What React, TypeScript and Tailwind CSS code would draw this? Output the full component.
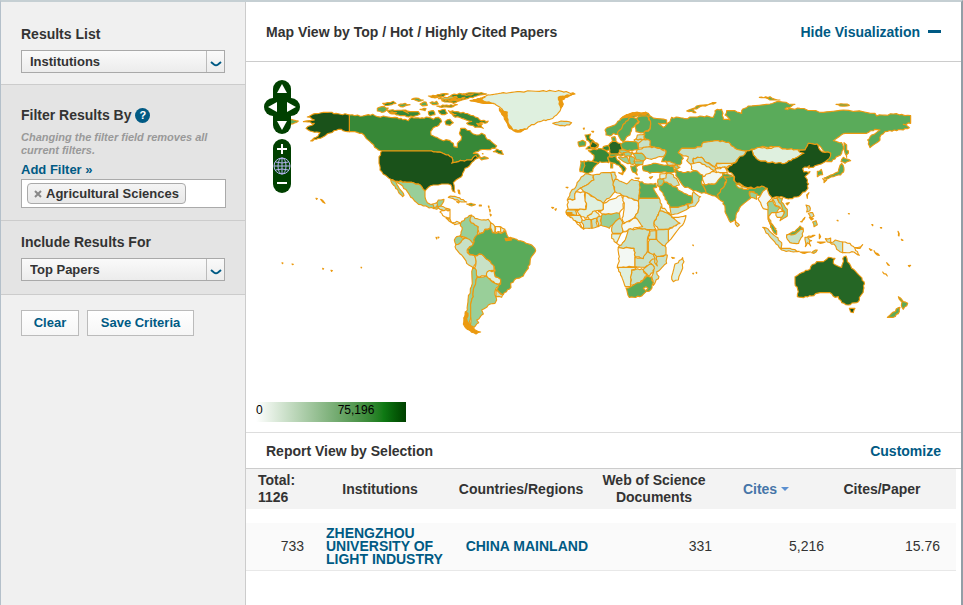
import React from "react";

type Shape = [fill: string, points: string];

const C = {
  deepest: "#1a521a",
  deep: "#256625",
  strong: "#378837",
  mid: "#5aab5a",
  light: "#99cf99",
  pale: "#c8e1c6",
  faint: "#dff0df",
  blank: "#f3f8f3",
  none: "#ffffff",
  line: "#eb9a10",
};

const northAmerica: Shape[] = [
  [C.strong, "-62,105 -45,107 -22,108 -5,104 8,103 23,110 40,108 75,112 105,118 115,122 125,112 150,115 175,112 190,118 205,112 215,125 207,135 190,143 182,155 183,165 200,172 215,180 240,182 250,190 252,200 262,202 262,190 273,180 275,170 268,160 272,145 285,145 300,152 310,162 320,165 335,160 345,165 352,178 370,190 380,198 375,205 330,210 310,220 325,222 330,230 318,235 310,232 305,240 290,240 265,245 245,250 248,238 235,225 215,218 185,213 35,213 25,210 5,190 -15,170 -25,160 -45,155 -62,155"],
  [C.deepest, "-62,105 -102,100 -140,97 -165,101 -188,111 -167,120 -200,125 -167,130 -192,145 -180,153 -160,156 -150,158 -162,172 -178,183 -155,175 -132,165 -108,152 -86,148 -62,155"],
  [C.deepest, "35,213 185,213 215,218 235,225 248,238 245,250 265,245 290,240 305,240 318,226 323,235 305,248 298,258 285,265 278,280 272,292 258,300 250,308 253,325 255,337 248,333 243,315 235,312 215,312 205,315 190,315 175,322 165,333 155,320 145,312 125,307 110,307 80,304 62,298 40,283 30,270 27,250 27,230"],
  [C.light, "80,304 110,307 125,307 145,312 155,320 165,333 165,350 172,368 188,373 200,370 205,360 222,358 218,370 212,378 200,388 190,385 160,378 140,368 128,355 112,335 98,318"],
  [C.light, "62,298 76,304 85,320 102,346 98,350 85,335 70,315"],
  [C.faint, "300,62 330,55 360,45 400,38 450,35 520,32 575,34 615,42 570,52 575,70 573,85 560,105 540,118 510,125 480,138 465,148 450,155 430,152 415,140 408,120 410,100 400,95 390,82 375,72 340,68"],
  [C.line, "388,85 402,94 412,96 410,105 414,118 418,135 428,148 416,140 408,124 402,110 396,104"],
  [C.line, "430,150 445,152 465,146 452,156 438,156"],
  [C.line, "302,62 325,57 345,52 330,62 350,66 372,70 340,70"],
  [C.line, "565,52 590,45 612,42 586,52 576,60 580,72 572,84"],
  [C.mid, "22,85 35,80 55,84 48,92 35,97 22,93"],
  [C.strong, "50,90 75,92 100,90 120,95 145,95 150,102 135,108 110,110 85,105 60,100"],
  [C.strong, "235,92 260,95 285,100 310,107 335,122 355,123 345,130 330,128 340,145 315,142 290,130 305,124 275,115 250,108"],
  [C.strong, "215,62 245,45 290,40 335,38 350,42 320,48 295,55 270,62 250,70 232,66"],
  [C.strong, "175,48 210,43 235,42 220,50 195,54"],
  [C.strong, "200,78 230,75 262,74 250,80 215,82"],
  [C.strong, "205,92 225,88 232,100 215,104"],
  [C.strong, "175,95 190,92 195,104 180,108"],
  [C.strong, "225,125 240,118 250,128 240,136 228,134"],
  [C.strong, "38,70 60,68 70,64 78,70 60,75 45,76"],
  [C.mid, "85,75 105,70 120,74 105,78 92,80"],
  [C.mid, "125,58 145,55 160,60 145,64"],
  [C.mid, "150,72 168,66 172,76 158,78"],
  [C.mid, "180,68 200,64 205,72 188,74"],
  [C.mid, "150,88 168,86 165,92"],
  [C.light, "205,56 225,52 260,50 230,60"],
  [C.line, "225,62 245,58 262,52 252,60 285,52 268,60"],
  [C.line, "180,50 200,48 215,48 198,52"],
  [C.line, "275,44 310,42 290,46"],
  [C.line, "60,96 80,98 70,100"],
  [C.line, "100,92 115,100 108,96"],
  [C.line, "240,98 258,104 250,104"],
  [C.line, "320,130 338,132 325,136"],
  [C.strong, "370,215 380,207 395,212 400,223 385,220"],
  [C.mid, "325,232 342,230 355,235 335,240"],
  [C.pale, "235,352 248,349 262,352 290,366 275,366 250,356"],
  [C.mid, "290,372 303,370 316,374 305,378"],
  [C.line, "328,375 334,375 334,378 328,378"],
  [C.line, "260,365 268,366 266,369"],
  [C.line, "264,330 268,331 270,342 266,340"],
  [C.mid, "-237,118 -215,123 -232,132 -248,130"],
  [C.line, "-162,355 -158,356 -160,358"],
  [C.line, "-148,358 -142,361 -135,370 -142,366"],
  [C.line, "355,378 357,378 357,384"],
  [C.line, "337,221 339,221 339,222"],
];

const southAmerica: Shape[] = [
  [C.pale, "-22,12 -10,8 -8,20 -20,26"],
  [C.pale, "-10,18 10,20 30,28 12,32 0,28"],
  [C.none, "0,36 12,32 30,30 30,55 14,50"],
  [C.pale, "18,54 30,57 38,70 28,64"],
  [C.faint, "38,68 50,64 62,70 52,72 44,74"],
  [C.light, "62,70 75,55 95,45 90,62 105,75 112,78 115,105 105,112 100,132 90,122 75,112 60,108 66,90"],
  [C.pale, "95,47 90,62 105,75 115,80 118,102 130,98 135,88 150,84 152,68 145,58 125,60 105,55"],
  [C.faint, "152,68 165,80 165,95 158,98 152,86"],
  [C.none, "165,80 180,80 182,96 168,98"],
  [C.faint, "182,80 195,88 188,98 182,96"],
  [C.light, "50,110 60,108 75,115 62,128 48,134 43,120"],
  [C.pale, "48,134 62,128 75,114 92,122 100,132 85,145 82,158 90,165 103,166 108,190 100,205 80,190 65,165 45,140"],
  [C.pale, "103,166 125,163 145,180 162,195 162,212 142,216 138,228 112,230 103,205 108,190"],
  [C.faint, "142,215 162,212 166,230 182,238 178,252 165,250 140,228"],
  [C.light, "98,205 105,205 112,232 103,260 100,290 92,320 92,350 88,378 95,388 90,392 75,375 72,362 82,330 84,300 94,260"],
  [C.light, "112,232 138,228 165,250 180,252 166,270 165,285 170,300 165,310 145,315 140,322 125,330 130,342 110,360 116,368 102,382 90,378 92,350 92,320 100,290 103,260"],
  [C.pale, "168,270 188,284 185,292 168,290"],
  [C.mid, "105,112 118,102 130,98 135,88 152,85 157,98 170,100 188,98 197,92 205,112 235,122 258,130 280,140 287,152 272,175 265,205 250,228 230,235 212,250 213,262 190,284 170,268 182,252 182,238 166,230 163,200 145,180 125,163 103,166 85,160 82,148 100,132"],
  [C.line, "195,115 212,112 215,120 198,122"],
  [C.line, "76,335 84,340 80,355 86,370 100,384 122,396 108,402 82,388 70,372"],
  [C.line, "148,28 151,30 150,36"],
  [C.line, "150,42 154,45 152,48"],
  [C.line, "-12,112 -9,113 -10,117"],
  [C.line, "335,22 341,23 338,25"],
  [C.line, "345,28 349,26 347,31"],
];

const europe: Shape[] = [
  [C.pale, "-22,130 -5,126 12,124 35,128 28,135 0,137 -12,134"],
  [C.mid, "54,186 68,181 77,186 75,198 58,200"],
  [C.strong, "75,165 92,162 88,172 98,180 105,188 116,194 108,205 90,207 78,207 92,197 90,188 80,180"],
  [C.deep, "96,184 106,190 114,196 106,204 92,202"],
  [C.mid, "135,150 150,140 170,130 190,110 225,98 265,100 270,108 240,108 215,113 195,130 180,150 172,163 160,160 150,168 138,165"],
  [C.line, "180,118 200,104 225,98 262,99 250,104 225,105 200,112"],
  [C.mid, "195,130 212,112 230,115 235,125 215,145 210,165 200,170 190,185 178,172 172,160 180,150"],
  [C.mid, "230,115 245,108 262,108 272,130 268,148 250,158 228,155 225,140 238,125"],
  [C.mid, "155,172 165,170 168,184 158,185"],
  [C.pale, "232,165 255,162 252,175 268,182 250,180 228,178"],
  [C.pale, "222,180 240,178 250,180 240,190 228,188"],
  [C.pale, "235,190 250,178 270,182 272,200 250,204 235,204"],
  [C.pale, "232,208 270,200 300,205 318,213 312,228 292,232 275,238 258,234 245,220 228,218"],
  [C.mid, "182,192 200,184 230,186 236,208 215,213 185,206"],
  [C.deep, "145,198 152,188 165,184 182,190 186,205 175,222 152,222"],
  [C.strong, "130,200 145,196 148,210 138,212 128,206"],
  [C.strong, "85,212 115,206 128,208 150,222 143,236 146,248 120,245 115,250 98,242 102,226"],
  [C.strong, "72,243 90,244 115,250 102,262 98,275 78,280 68,275"],
  [C.mid, "62,243 74,244 70,275 60,275"],
  [C.strong, "143,232 168,226 172,240 188,255 198,266 190,278 185,265 165,250 148,245"],
  [C.mid, "148,222 175,222 190,218 190,226 150,230"],
  [C.light, "178,210 210,212 200,220 180,218"],
  [C.light, "190,218 218,216 212,228 195,230"],
  [C.light, "175,232 200,230 210,250 198,248"],
  [C.light, "208,230 222,232 225,250 212,252"],
  [C.light, "218,220 245,220 258,236 250,243 228,240"],
  [C.light, "222,243 250,243 248,254 226,254"],
  [C.mid, "212,258 240,254 228,262 232,285 218,276"],
  [C.line, "176,278 190,277 188,284"],
  [C.mid, "152,250 158,250 158,264 152,264"],
  [C.mid, "248,258 280,250 320,255 338,258 348,275 300,278 270,280 250,272"],
  [C.pale, "316,242 345,250 345,258 325,256"],
  [C.light, "338,256 350,254 360,262 350,268"],
  [C.line, "225,294 238,294 236,297"],
  [C.pale, "268,292 278,290 272,296"],
  [C.line, "70,145 73,144 72,148"],
  [C.line, "95,154 101,154 99,157"],
];

const africa: Shape[] = [
  [C.pale, "75,42 100,45 102,60 85,72 60,85 48,95 45,118 22,120 30,100 50,75 60,58"],
  [C.pale, "100,46 130,38 155,38 160,62 165,95 130,130 75,97 60,85 85,72 102,60"],
  [C.pale, "152,38 165,37 168,55 160,65"],
  [C.pale, "165,58 185,65 200,72 215,58 240,66 238,125 185,105 165,95 160,68"],
  [C.mid, "240,66 265,72 288,70 290,82 280,84 298,115 238,115"],
  [C.blank, "48,95 75,97 78,148 25,148 22,120 45,118"],
  [C.faint, "76,97 130,130 130,148 105,155 85,168 75,175 60,165 48,150 78,148"],
  [C.blank, "130,130 185,105 192,118 190,145 178,162 125,162 115,155 130,148"],
  [C.blank, "190,108 238,125 235,150 225,170 195,190 186,175 192,150"],
  [C.pale, "238,115 298,115 306,140 298,160 282,190 288,208 240,205 225,170 235,150"],
  [C.pale, "300,152 320,156 340,175 360,190 325,208 295,208 282,190"],
  [C.faint, "303,140 318,150 332,165 322,160 300,152"],
  [C.blank, "335,172 355,172 378,167 368,195 325,245 325,210 360,190"],
  [C.light, "128,162 178,160 180,175 162,190 148,205 122,195"],
  [C.pale, "22,148 45,150 50,165 20,163 18,154"],
  [C.faint, "28,166 60,166 68,185 56,188 40,180"],
  [C.line, "18,158 36,158 34,168 24,168"],
  [C.none, "46,182 58,188 70,206 58,196"],
  [C.pale, "66,180 92,178 94,204 70,208"],
  [C.pale, "92,175 108,174 112,200 95,205"],
  [C.faint, "82,168 105,152 118,165 110,174 88,178"],
  [C.pale, "112,172 124,168 122,196 114,200"],
  [C.pale, "155,205 162,190 180,175 188,192 188,220 158,220"],
  [C.blank, "186,192 228,174 248,200 210,208 190,215"],
  [C.faint, "155,222 182,222 182,240 168,248 155,235"],
  [C.none, "184,220 205,210 200,240 182,258 170,250"],
  [C.pale, "205,208 240,206 268,210 262,240 262,280 250,296 225,290 222,265 175,262 192,245"],
  [C.blank, "175,262 222,265 225,290 225,320 172,322 178,290"],
  [C.pale, "225,292 250,296 262,275 288,282 285,305 255,322 225,320"],
  [C.pale, "270,238 292,238 318,262 318,285 290,290 265,275 265,245"],
  [C.pale, "290,210 325,208 325,245 315,258 290,238"],
  [C.pale, "270,213 288,212 288,238 266,238"],
  [C.pale, "290,290 322,285 320,310 290,335 297,350 280,376 275,350 282,320 268,308"],
  [C.pale, "282,280 290,290 292,318 284,308"],
  [C.pale, "248,330 272,312 282,320 280,338 265,348"],
  [C.faint, "172,322 230,322 215,330 212,380 196,380 185,350"],
  [C.pale, "215,330 245,326 262,346 240,368 212,375"],
  [C.mid, "198,384 212,380 238,368 262,348 275,352 280,368 276,384 245,408 208,412"],
  [C.blank, "250,385 258,380 264,385 257,392"],
  [C.faint, "335,350 345,312 355,308 368,293 372,305 355,360 340,365"],
  [C.mid, "295,78 312,65 345,80 372,100 385,106 400,112 395,130 355,142 330,142 310,105"],
  [C.pale, "330,142 355,142 380,133 385,145 345,162 334,165"],
  [C.pale, "400,95 422,110 405,138 385,145 382,133 398,128"],
  [C.pale, "318,40 340,44 358,75 345,80 320,66 305,62"],
  [C.faint, "300,42 322,38 318,54 302,60"],
  [C.light, "294,58 312,60 305,76 292,78"],
  [C.line, "18,82 24,82 22,84"],
  [C.line, "335,292 344,294 338,295"],
  [C.line, "398,255 400,255 400,257"],
  [C.line, "398,340 401,340 400,342"],
  [C.line, "408,338 410,337 410,340"],
];

const asia: Shape[] = [
  [C.mid, "-98,108 -40,120 -40,132 -65,130 -50,142 -30,125 -25,112 15,116 60,108 100,112 105,92 125,88 130,118 150,120 135,105 140,92 165,92 185,100 185,92 205,78 270,72 290,65 345,73 315,87 360,85 430,97 490,90 585,100 590,108 640,102 692,107 692,130 670,133 688,143 650,152 615,155 603,165 600,180 570,203 563,180 575,165 600,150 585,148 560,160 495,160 460,182 485,188 490,200 485,220 455,245 440,245 452,220 435,217 415,195 385,190 375,210 355,210 320,208 290,200 240,202 215,208 200,213 165,205 145,187 115,182 70,187 65,200 40,205 5,205 -5,218 10,235 0,255 -20,258 -45,245 -55,245 -48,230 -42,213 -60,205 -90,200 -90,182 -108,172 -108,158 -90,148 -88,132"],
  [C.pale, "-5,218 5,205 40,205 65,200 70,187 115,182 145,187 165,205 200,213 190,228 170,240 165,250 110,250 105,260 80,248 65,232 40,235 38,255 20,242 25,230 10,228"],
  [C.pale, "40,235 65,232 80,248 105,262 112,270 100,272 62,248 42,252"],
  [C.blank, "32,252 60,247 100,271 85,284 68,290 42,272 34,268"],
  [C.faint, "110,250 165,248 140,262 112,264"],
  [C.blank, "106,266 135,262 142,278 110,278"],
  [C.mid, "-17,268 10,278 45,272 68,285 66,312 78,340 40,332 10,318 -8,292"],
  [C.blank, "68,290 95,275 128,278 128,288 108,312 75,315"],
  [C.mid, "66,314 105,312 125,292 130,280 155,285 158,300 140,302 128,325 112,345 118,358 105,348 78,338"],
  [C.mid, "132,290 158,288 165,305 200,325 225,325 245,318 260,325 240,348 232,345 222,335 208,335 212,355 178,385 168,405 165,420 152,427 135,395 130,365 118,358 112,345 128,325 140,300"],
  [C.faint, "168,313 200,322 205,328 190,328 172,320"],
  [C.light, "210,335 232,342 230,358 212,352"],
  [C.faint, "215,208 240,202 275,205 290,200 320,208 355,210 372,220 345,235 315,250 270,248 235,240 220,225"],
  [C.deepest, "200,213 215,208 220,225 235,240 270,248 315,250 345,235 372,220 355,212 375,210 385,190 412,192 420,210 435,217 452,220 448,235 430,248 400,262 386,265 388,257 368,266 372,276 390,275 375,290 386,312 380,330 355,350 325,357 310,352 290,350 275,355 265,345 262,325 245,318 225,325 200,322 165,305 160,285 138,265 170,245 175,235 195,222"],
  [C.blank, "260,325 268,345 275,356 262,370 268,388 250,386 242,368 234,355 245,340"],
  [C.light, "262,370 278,360 286,378 300,382 290,398 275,398 266,410 280,440 288,446 272,442 264,418"],
  [C.pale, "278,358 292,356 310,380 310,394 300,382 286,376"],
  [C.light, "290,351 308,354 304,366 322,388 322,408 300,422 304,412 314,396"],
  [C.faint, "288,398 312,395 305,412 292,412"],
  [C.pale, "166,420 178,435 172,440 166,432"],
  [C.deepest, "318,370 328,368 322,375"],
  [C.mid, "380,345 387,338 382,355"],
  [C.mid, "412,274 424,268 428,284 412,290"],
  [C.mid, "490,232 512,242 495,250 483,245"],
  [C.mid, "485,250 492,270 482,285 460,290 440,298 432,294 458,284 475,275"],
  [C.mid, "428,296 440,300 432,308"],
  [C.mid, "492,188 500,195 500,210 505,212 500,232 494,215"],
  [C.mid, "20,93 50,78 108,68 60,80 38,90 48,98"],
  [C.mid, "238,52 270,50 300,60 270,60 262,55"],
  [C.mid, "468,73 490,72 508,76 480,78"],
  [C.pale, "378,375 388,378 390,392 380,396"],
  [C.pale, "385,400 398,398 402,408 392,414"],
  [C.light, "398,426 408,422 412,434 402,440"],
  [C.line, "388,412 400,416 394,420"],
  [C.line, "362,425 375,412 366,426"],
  [C.line, "505,401 508,401 508,402"],
  [C.line, "471,421 474,421 474,423"],
  [C.line, "576,434 578,434 578,437"],
  [C.line, "602,443 605,443 605,444"],
];

const oceania: Shape[] = [
  [C.pale, "68,142 85,148 108,170 125,188 124,206 108,192 88,168"],
  [C.mid, "86,122 98,135 110,152 110,164 98,152"],
  [C.pale, "120,205 150,205 178,214 160,216 125,210"],
  [C.pale, "140,165 158,160 175,150 190,148 188,168 176,190 150,188 142,178"],
  [C.mid, "140,165 165,155 180,138 190,145 176,154 160,164"],
  [C.pale, "195,172 225,166 204,174 215,182 208,184 212,198 202,188 196,200"],
  [C.line, "180,216 212,216 195,220"],
  [C.light, "215,218 232,210 222,220"],
  [C.line, "238,162 242,170 238,176"],
  [C.line, "232,186 256,186 240,190"],
  [C.pale, "256,176 272,174 272,188 286,180 308,186 308,218 290,208 282,192 262,186"],
  [C.blank, "308,186 330,190 345,205 358,226 335,215 308,218"],
  [C.faint, "345,203 362,200 368,194 360,205"],
  [C.deep, "165,290 185,278 210,268 212,260 230,245 250,245 265,232 285,235 280,250 305,262 312,230 318,228 322,245 335,265 352,280 372,305 370,330 355,365 325,375 305,368 295,350 285,352 270,338 240,338 215,348 185,352 172,350 175,335 165,310"],
  [C.deepest, "328,385 345,385 340,398 332,396"],
  [C.mid, "475,350 490,365 503,370 490,388 484,376 486,366"],
  [C.mid, "480,382 478,395 460,412 442,412 460,396"],
  [C.line, "428,276 442,288 432,281"],
  [C.line, "505,257 512,256 508,260"],
  [C.line, "388,206 396,210 392,211"],
  [C.line, "402,212 418,226 406,220"],
  [C.line, "440,248 448,256 444,255"],
  [C.line, "474,154 477,168 475,166"],
  [C.line, "484,178 489,181 486,181"],
  [C.line, "396,134 398,134 398,136"],
  [C.line, "421,143 424,143 424,144"],
];

const lonelyIslands: Shape[] = [
  [C.line, "108,578 111,579 109,581"],
  [C.line, "138,582 142,583 140,584"],
  [C.line, "255,601 259,602 257,604"],
  [C.line, "345,592 347,592 346,594"],
  [C.line, "576,501 579,502 577,504"],
  [C.line, "230,595 233,596 231,598"],
];

const regions: { name: string; x: number; y: number; shapes: Shape[] }[] = [
  { name: "asia", x: 680, y: 80, shapes: asia },
  { name: "europe", x: 560, y: 80, shapes: europe },
  { name: "africa", x: 560, y: 160, shapes: africa },
  { name: "north-america", x: 370, y: 80, shapes: northAmerica },
  { name: "south-america", x: 440, y: 200, shapes: southAmerica },
  { name: "oceania", x: 740, y: 180, shapes: oceania },
  { name: "islands", x: 246, y: 70, shapes: lonelyIslands },
];

// Breaks every edge into short, slightly uneven pieces so that coasts look natural.
// The offset depends only on the edge's ends, so neighbours share the same border.
function coastline(points: string): string {
  const p = points.split(" ").map((s) => s.split(",").map(Number));
  const out: string[] = [];
  p.forEach(([ax, ay], i) => {
    const [bx, by] = p[(i + 1) % p.length];
    out.push(`${ax} ${ay}`);
    const len = Math.hypot(bx - ax, by - ay);
    const straight = ax === bx || ay === by;
    if (len > 9 && !straight) {
      const flip = ax > bx || (ax === bx && ay > by);
      const dir = flip ? -1 : 1;
      const n = Math.min(6, Math.floor(len / 6));
      for (let k = 1; k < n; k++) {
        const order = flip ? n - k : k;
        const seed = Math.sin((ax + bx) * 12.9 + (ay + by) * 78.2 + order * 37.7) * 43758.5;
        const off = (seed - Math.floor(seed) - 0.5) * 5 * dir;
        const t = k / n;
        const x = ax + (bx - ax) * t - ((by - ay) / len) * off;
        const y = ay + (by - ay) * t + ((bx - ax) / len) * off;
        out.push(`${x.toFixed(1)} ${y.toFixed(1)}`);
      }
    }
  });
  return `M${out.join("L")}Z`;
}

function WorldMap() {
  return (
    <svg viewBox="246 62 715 340" className="block h-auto w-full" role="img" aria-label="World map">
      {regions.map((r) => (
        <g key={r.name} transform={`translate(${r.x} ${r.y}) scale(0.33333)`} stroke={C.line} strokeWidth="3.4" strokeLinejoin="round">
          {r.shapes.map(([fill, pts], i) => (
            <path key={i} d={coastline(pts)} fill={fill} />
          ))}
        </g>
      ))}
    </svg>
  );
}

const ctl = "block size-[18px] bg-[#004000]";

function Arrow({ d }: { d: string }) {
  return (
    <svg viewBox="0 0 18 18" className="size-[18px]" aria-hidden="true">
      <path d={d} fill="#fff" />
    </svg>
  );
}

function MapControls() {
  return (
    <div className="absolute top-[18px] left-[18px] flex flex-col items-center gap-[5px]">
      <div className="flex flex-col items-center">
        <button aria-label="Pan up" className={`${ctl} rounded-t-full`}><Arrow d="M9 4L14 13H4Z" /></button>
        <div className="flex">
          <button aria-label="Pan left" className={`${ctl} rounded-l-full`}><Arrow d="M4 9L13 4V14Z" /></button>
          <button aria-label="Pan right" className={`${ctl} rounded-r-full`}><Arrow d="M14 9L5 4V14Z" /></button>
        </div>
        <button aria-label="Pan down" className={`${ctl} rounded-b-full`}><Arrow d="M9 14L14 5H4Z" /></button>
      </div>
      <div className="flex flex-col">
        <button aria-label="Zoom in" className={`${ctl} rounded-t-full`}><Arrow d="M8 5H10V9H14V11H10V15H8V11H4V9H8Z" /></button>
        <button aria-label="Show whole world" className={ctl}>
          <svg viewBox="0 0 18 18" className="size-[18px]" fill="none" stroke="#b4b4f0" aria-hidden="true">
            <circle cx="9" cy="9" r="8" />
            <ellipse cx="9" cy="9" rx="4" ry="8" />
            <path d="M9 1V17M1 9H17M2.500 5Q9 7 15.500 5M2.500 13Q9 11 15.500 13" />
          </svg>
        </button>
        <button aria-label="Zoom out" className={`${ctl} rounded-b-full`}><Arrow d="M4 7H14V9H4Z" /></button>
      </div>
    </div>
  );
}

function Picker({ id, label, options }: { id: string; label: string; options: string[] }) {
  return (
    <>
      <label htmlFor={id} className="block text-sm leading-5 font-bold">{label}</label>
      <div className="relative mt-1.5 h-[23px] w-[204px] border border-[#a9a9a9] bg-linear-to-b from-[#fafafa] to-[#ececec]">
        <select id={id} className="block h-[21px] w-full appearance-none pl-2 text-[13px] leading-5 font-bold text-[#333]">
          {options.map((o) => <option key={o}>{o}</option>)}
        </select>
        <span className="pointer-events-none absolute inset-y-0 right-0 flex w-[18px] items-center justify-center border-l border-[#bbb]">
          <svg width="12" height="8" viewBox="0 0 12 8" className="mt-1" fill="none" stroke="#005a84" strokeWidth="2" aria-hidden="true">
            <path d="M1 2L4 4.500Q6 6 8 4.500L11 2" />
          </svg>
        </span>
      </div>
    </>
  );
}

const plain = "h-[26px] border border-[#bbb] bg-linear-to-b from-white to-[#f6f6f6] text-[13px] font-bold text-[#005a84]";

function Sidebar() {
  return (
    <aside className="w-[245px] shrink-0 border-r border-[#ccc] bg-[#f0f0f0]">
      <section className="border-b border-[#ccc] px-5 pt-[22px] pb-[11px]">
        <Picker id="results" label="Results List" options={["Institutions", "Countries"]} />
      </section>
      <section className="border-b border-[#ccc] bg-[#e4e4e4] px-5 pt-5 pb-3">
        <h2 className="flex items-center gap-1 text-sm leading-5 font-bold">
          Filter Results By
          <button aria-label="Help" className="size-[15px] rounded-full bg-[#005a84] text-[11px] leading-[15px] text-white">?</button>
        </h2>
        <p className="mt-1.5 text-[11px] leading-[13px] font-bold whitespace-nowrap text-[#999] italic">
          Changing the filter field removes all<br />current filters.
        </p>
        <a href="#add" className="mt-1 block text-[13px] leading-[18px] font-bold text-[#005a84]">Add Filter »</a>
        <div className="flex h-[29px] w-[205px] items-start border border-[#aaa] bg-white px-[5px] py-[3px]">
          <span className="flex h-[21px] items-center rounded-sm border border-[#aaa] bg-linear-to-b from-[#f4f4f4] to-[#e8e8e8] pr-1.5 pl-1.5 text-[13px] font-bold">
            <button aria-label="Remove Agricultural Sciences" className="mr-1">
              <svg width="8" height="8" viewBox="0 0 8 8" stroke="#888" strokeWidth="2" aria-hidden="true"><path d="M1 1L7 7M7 1L1 7" /></svg>
            </button>
            Agricultural Sciences
          </span>
        </div>
      </section>
      <section className="border-b border-[#ccc] bg-[#e4e4e4] px-5 pt-[11px] pb-[13px]">
        <Picker id="include" label="Include Results For" options={["Top Papers", "Hot Papers"]} />
      </section>
      <div className="flex gap-2 px-5 pt-[15px]">
        <button className={`${plain} w-[58px]`}>Clear</button>
        <button className={`${plain} w-[107px]`}>Save Criteria</button>
      </div>
    </aside>
  );
}

function Report() {
  return (
    <table className="mr-[5px] table-fixed border-collapse text-sm">
      <colgroup>
        <col className="w-[68px]" />
        <col className="w-[132px]" />
        <col className="w-[150px]" />
        <col className="w-[116px]" />
        <col className="w-[112px]" />
        <col />
      </colgroup>
      <thead className="bg-[#f3f3f3]">
        <tr className="h-10 leading-[17px]">
          <th className="pl-3 text-left">Total:<br />1126</th>
          <th>Institutions</th>
          <th>Countries/Regions</th>
          <th className="px-1">Web of Science Documents</th>
          <th className="pr-1 text-[#4675a8]">
            <button className="inline-flex items-center gap-1 font-bold">
              Cites
              <svg width="8" height="5" viewBox="0 0 8 5" aria-hidden="true"><path d="M0 0H8L4 4Z" fill="#5b8fd0" /></svg>
            </button>
          </th>
          <th className="pr-4">Cites/Paper</th>
        </tr>
      </thead>
      <tbody>
        <tr className="h-3.5" aria-hidden="true"><td colSpan={6} /></tr>
        <tr className="h-[47px] border-b border-[#e8e8e8] bg-[#fafafa] text-right">
          <td className="pr-2.5">733</td>
          <td className="pl-3 text-left leading-[13px] font-bold text-[#005a84]"><a href="#inst">ZHENGZHOU UNIVERSITY OF LIGHT INDUSTRY</a></td>
          <td className="pr-2 font-bold text-[#005a84]"><a href="#country">CHINA MAINLAND</a></td>
          <td>331</td>
          <td>5,216</td>
          <td className="pr-4">15.76</td>
        </tr>
      </tbody>
    </table>
  );
}

export default function App() {
  return (
    <div className="flex min-h-screen border-t-2 border-r-2 border-l border-t-[#c5cfd3] border-r-[#929ea6] border-l-[#b4c0ca] bg-white font-['Liberation_Sans',Arial,sans-serif] text-[#333]">
      <Sidebar />
      <main className="flex min-w-0 flex-1 flex-col">
        <header className="flex h-[60px] items-center justify-between border-b border-[#ccc] px-5 text-sm font-bold">
          <h1>Map View by Top / Hot / Highly Cited Papers</h1>
          <button className="flex items-center gap-2 text-[#005a84]">
            Hide Visualization
            <span className="h-[3px] w-[13px] bg-[#005a84]" />
          </button>
        </header>
        <section className="relative">
          <WorldMap />
          <MapControls />
        </section>
        <div className="mb-2.5 ml-2.5 flex h-5 w-[150px] bg-linear-to-r from-white via-[#0f7a14] via-85% to-[#004000] text-xs leading-4 text-black">
          <span>0</span>
          <span className="ml-[75px]">75,196</span>
        </div>
        <div className="flex h-[37px] items-center justify-between border-y border-t-[#ddd] border-b-[#ccc] px-5 text-sm font-bold">
          <h2>Report View by Selection</h2>
          <a href="#customize" className="text-[#005a84]">Customize</a>
        </div>
        <Report />
      </main>
    </div>
  );
}
